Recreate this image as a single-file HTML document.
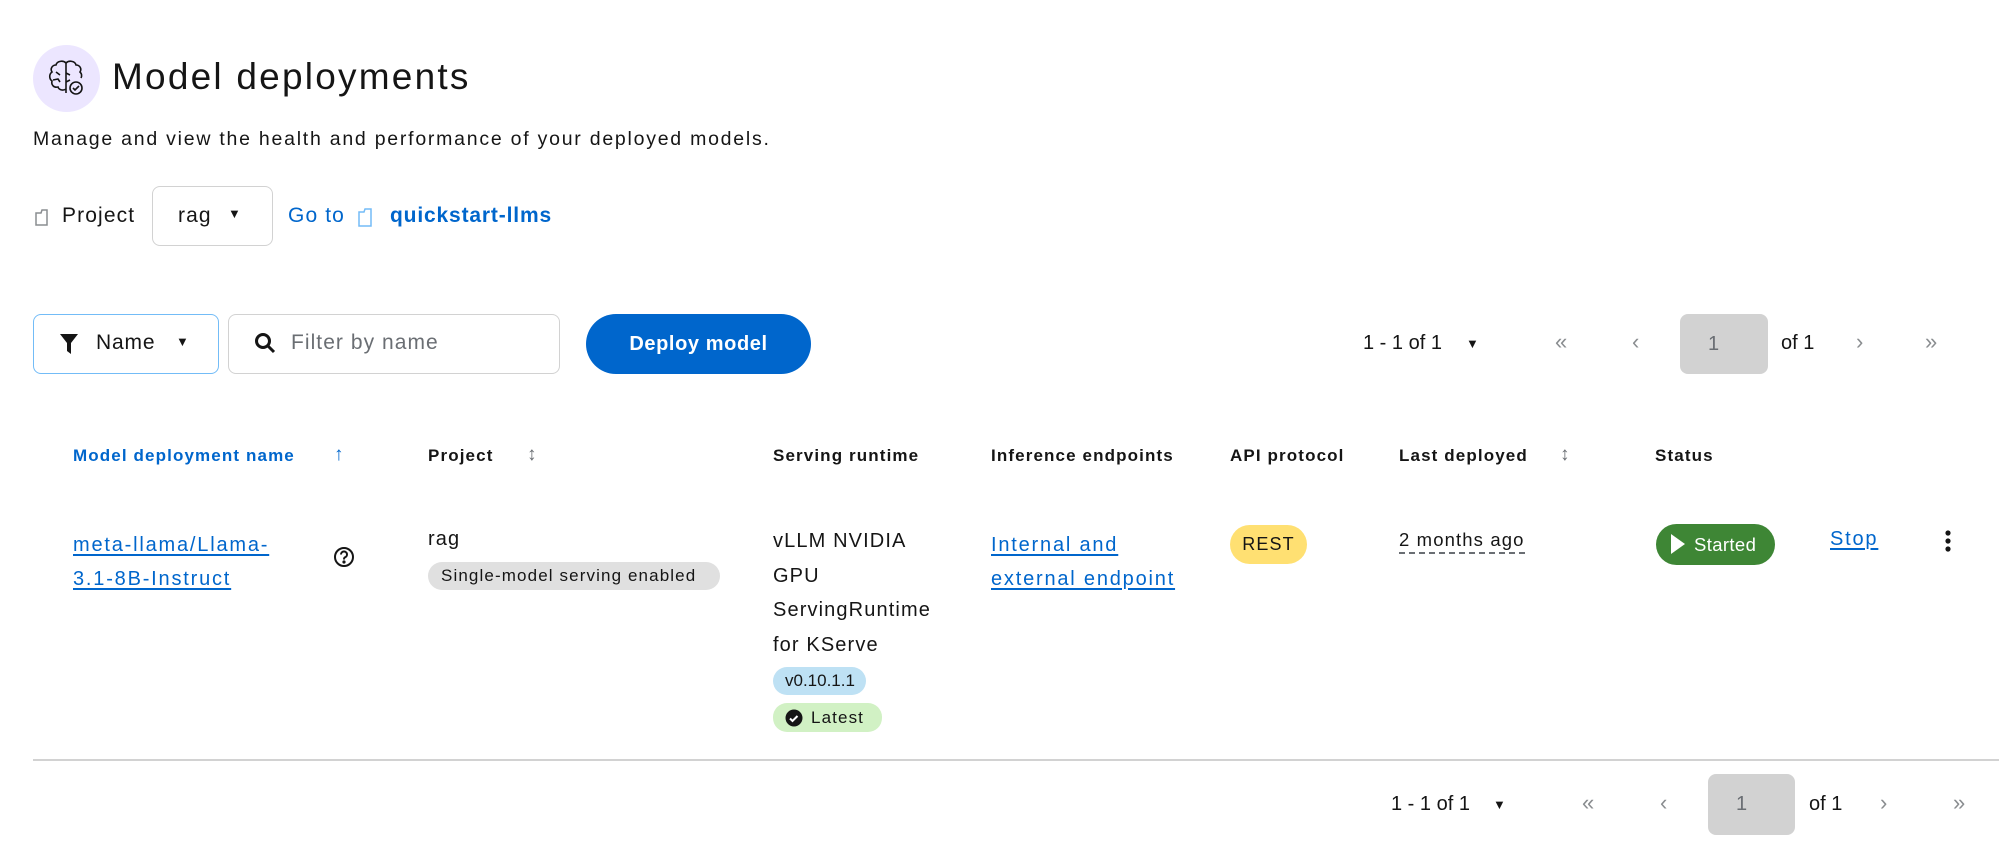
<!DOCTYPE html>
<html><head><meta charset="utf-8"><style>
*{box-sizing:border-box;margin:0;padding:0}
body{width:1999px;height:857px;background:#fff;font-family:"Liberation Sans",sans-serif;color:#151515;position:relative;overflow:hidden;letter-spacing:0.07em}
.a{position:absolute;white-space:nowrap}
.lnk{color:#0066cc;text-decoration:underline;text-underline-offset:3px;letter-spacing:0.09em}
.h{font-size:17px;font-weight:bold;top:446px}
.t{font-size:20px}
.pg{font-size:20px;color:#151515;letter-spacing:0}
.ic{color:#8a8d90;font-size:22px;letter-spacing:0}
</style></head><body>
<div class="a" style="left:33px;top:45px;width:67px;height:67px;border-radius:50%;background:#ece6ff"></div>
<svg class="a" style="left:43px;top:55px" width="46" height="46" viewBox="0 0 46 46" fill="none" stroke="#151515" stroke-width="1.6">
<path d="M23 8v30M23 8c-3-3-9-2-10 2-4 0-6 4-4 7-3 2-3 7 0 9-1 4 2 7 6 6 1 3 5 4 8 2"/>
<path d="M23 8c3-3 9-2 10 2 4 0 6 4 4 7 2 2 2 4 1 6"/>
<path d="M13 17l4 3M10 25l5-1 2 3M23 18l4 2M23 27l4-2"/>
<circle cx="33" cy="33" r="6"/><path d="M30 33l2 2 4-4"/>
</svg>
<div class="a" style="left:112px;top:56px;font-size:37px;letter-spacing:0.06em">Model deployments</div>
<div class="a" style="left:33px;top:128px;font-size:19.5px;letter-spacing:0.09em">Manage and view the health and performance of your deployed models.</div>

<svg class="a" style="left:34px;top:207px" width="16" height="20" viewBox="0 0 16 20" fill="none" stroke="#8a8d90" stroke-width="1.5"><path d="M2 6h5l1-3h5v15H2z"/></svg>
<div class="a" style="left:62px;top:204px;font-size:21px">Project</div>
<div class="a" style="left:152px;top:186px;width:121px;height:60px;border:1px solid #d2d2d2;border-radius:8px"></div>
<div class="a" style="left:178px;top:204px;font-size:21px">rag</div>
<div class="a" style="left:228px;top:206px;font-size:13px">▼</div>
<div class="a" style="left:288px;top:204px;font-size:21px;color:#0066cc">Go to</div>
<svg class="a" style="left:357px;top:206px" width="18" height="22" viewBox="0 0 18 22" fill="none" stroke="#73bcf7" stroke-width="1.5"><path d="M2 6h5l1-3h6v17H2z"/></svg>
<div class="a" style="left:390px;top:204px;font-size:21px;color:#0066cc;font-weight:bold;letter-spacing:0.04em">quickstart-llms</div>

<div class="a" style="left:33px;top:314px;width:186px;height:60px;border:1.5px solid #73bcf7;border-radius:8px"></div>
<svg class="a" style="left:59px;top:333px" width="20" height="22" viewBox="0 0 20 22"><path d="M1 1h18l-7 9v11l-4-3v-8z" fill="#151515"/></svg>
<div class="a" style="left:96px;top:331px;font-size:21px;letter-spacing:0.04em">Name</div>
<div class="a" style="left:176px;top:334px;font-size:13px">▼</div>
<div class="a" style="left:228px;top:314px;width:332px;height:60px;border:1px solid #d2d2d2;border-radius:8px"></div>
<svg class="a" style="left:254px;top:332px" width="22" height="22" viewBox="0 0 22 22" fill="none" stroke="#151515" stroke-width="3"><circle cx="9" cy="9" r="6.5"/><path d="M14 14l6 6"/></svg>
<div class="a" style="left:291px;top:331px;font-size:21px;color:#6a6e73;letter-spacing:0.05em">Filter by name</div>
<div class="a" style="left:586px;top:314px;width:225px;height:60px;border-radius:30px;background:#0066cc;color:#fff;font-size:20px;font-weight:bold;text-align:center;line-height:60px;letter-spacing:0.03em">Deploy model</div>

<div class="a pg" style="left:1363px;top:332px">1 - 1 of 1</div>
<div class="a" style="left:1466px;top:336px;font-size:13px">▼</div>
<div class="a ic" style="left:1555px;top:329px">«</div>
<div class="a ic" style="left:1632px;top:329px">‹</div>
<div class="a" style="left:1680px;top:314px;width:88px;height:60px;border-radius:8px;background:#d2d2d2;color:#6a6e73;font-size:20px;line-height:60px;padding-left:28px">1</div>
<div class="a pg" style="left:1781px;top:332px">of 1</div>
<div class="a ic" style="left:1856px;top:329px">›</div>
<div class="a ic" style="left:1925px;top:329px">»</div>

<div class="a h" style="left:73px;color:#0066cc">Model deployment name</div>
<div class="a h" style="left:334px;color:#0066cc;font-size:19px;top:444px">↑</div>
<div class="a h" style="left:428px">Project</div>
<div class="a h" style="left:527px;color:#6a6e73;font-size:19px;top:444px">↕</div>
<div class="a h" style="left:773px">Serving runtime</div>
<div class="a h" style="left:991px">Inference endpoints</div>
<div class="a h" style="left:1230px">API protocol</div>
<div class="a h" style="left:1399px">Last deployed</div>
<div class="a h" style="left:1560px;color:#6a6e73;font-size:19px;top:444px">↕</div>
<div class="a h" style="left:1655px">Status</div>

<div class="a t lnk" style="left:73px;top:528px;line-height:34px">meta-llama/Llama-<br>3.1-8B-Instruct</div>
<svg class="a" style="left:333px;top:546px" width="22" height="22" viewBox="0 0 22 22" fill="none" stroke="#151515" stroke-width="2"><circle cx="11" cy="11" r="9"/><path d="M8 8.5a3 3 0 1 1 4 2.8c-1 .4-1 1-1 2.2"/><circle cx="11" cy="16" r=".6" fill="#151515"/></svg>
<div class="a t" style="left:428px;top:528px">rag</div>
<div class="a" style="left:428px;top:562px;width:292px;height:28px;border-radius:14px;background:#e0e0e0;font-size:17px;line-height:28px;padding-left:13px;color:#151515">Single-model serving enabled</div>
<div class="a t" style="left:773px;top:524px;line-height:34.5px">vLLM NVIDIA<br>GPU<br>ServingRuntime<br>for KServe</div>
<div class="a" style="left:773px;top:667px;width:93px;height:28px;border-radius:14px;background:#bee1f4;font-size:17px;line-height:28px;padding-left:12px;letter-spacing:0">v0.10.1.1</div>
<div class="a" style="left:773px;top:703px;width:109px;height:29px;border-radius:14px;background:#d1f1c4;font-size:17px;line-height:29px;padding-left:38px">Latest</div>
<svg class="a" style="left:785px;top:709px" width="18" height="18" viewBox="0 0 18 18"><circle cx="9" cy="9" r="8.5" fill="#151515"/><path d="M5 9.5l2.5 2.5 5-5" stroke="#fff" stroke-width="2" fill="none"/></svg>
<div class="a t lnk" style="left:991px;top:528px;line-height:34px">Internal and<br>external endpoint</div>
<div class="a" style="left:1230px;top:525px;width:77px;height:39px;border-radius:20px;background:#ffe072;font-size:18px;line-height:39px;text-align:center">REST</div>
<div class="a" style="left:1399px;top:529px;font-size:18.5px;border-bottom:2px dashed #6a6e73;padding-bottom:1px">2 months ago</div>
<div class="a" style="left:1656px;top:524px;width:119px;height:41px;border-radius:21px;background:#3e8635;color:#fff;font-size:18.5px;line-height:41px;padding-left:38px;letter-spacing:0.02em">Started</div>
<svg class="a" style="left:1670px;top:533px" width="16" height="22" viewBox="0 0 16 22"><path d="M1 1l14 10L1 21z" fill="#fff"/></svg>
<div class="a t lnk" style="left:1830px;top:528px">Stop</div>
<svg class="a" style="left:1942px;top:528px" width="12" height="28" viewBox="0 0 12 28" fill="#151515"><circle cx="6" cy="5" r="2.6"/><circle cx="6" cy="13" r="2.6"/><circle cx="6" cy="21" r="2.6"/></svg>

<div class="a" style="left:33px;top:759px;width:1966px;height:2px;background:#d2d2d2"></div>

<div class="a pg" style="left:1391px;top:793px">1 - 1 of 1</div>
<div class="a" style="left:1493px;top:797px;font-size:13px">▼</div>
<div class="a ic" style="left:1582px;top:790px">«</div>
<div class="a ic" style="left:1660px;top:790px">‹</div>
<div class="a" style="left:1708px;top:774px;width:87px;height:61px;border-radius:8px;background:#d2d2d2;color:#6a6e73;font-size:20px;line-height:61px;padding-left:28px">1</div>
<div class="a pg" style="left:1809px;top:793px">of 1</div>
<div class="a ic" style="left:1880px;top:790px">›</div>
<div class="a ic" style="left:1953px;top:790px">»</div>
</body></html>
